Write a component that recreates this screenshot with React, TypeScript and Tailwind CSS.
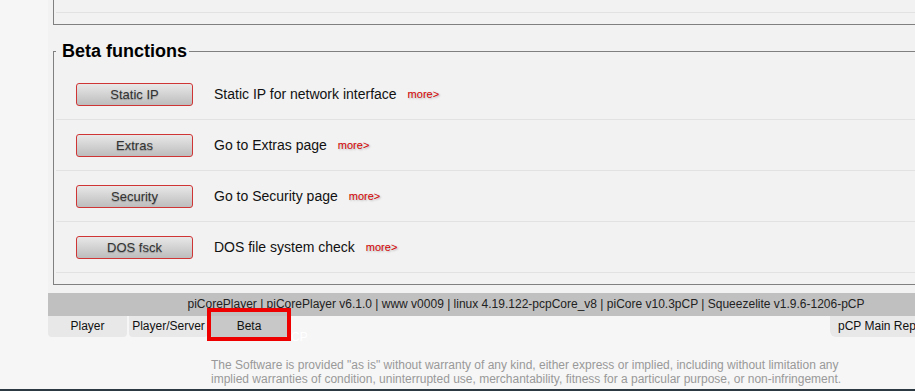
import React from "react";

const rows = [
  { btn: "Static IP", desc: "Static IP for network interface" },
  { btn: "Extras", desc: "Go to Extras page" },
  { btn: "Security", desc: "Go to Security page" },
  { btn: "DOS fsck", desc: "DOS file system check" },
];

export default function App() {
  return (
    <div className="relative w-[915px] h-[391px] overflow-hidden bg-[#f6f6f6] font-['Liberation_Sans',Arial,sans-serif]">
      <div className="flex flex-col h-full">
        <div className="ml-[48px] w-[956px] h-[293px] shrink-0 bg-[#f2f2f2] pl-[5px] pr-[5px]">
          {/* previous fieldset tail */}
          <div className="border-l border-r border-b border-[#808080] px-[2px] pb-[11px]">
            <div className="h-[13px] border-b border-[#e2e2e2]" />
          </div>
          {/* Beta fieldset */}
          <fieldset className="mt-[16px] border border-[#808080] px-[2px] pt-0 pb-[11px]">
            <legend className="pl-[6px] pr-[2px] text-[18px] leading-[20px] font-bold text-black">
              Beta functions
            </legend>
            <div className="mt-[8px]">
              {rows.map((r) => (
                <div
                  key={r.btn}
                  className="h-[51px] border-b border-[#e2e2e2] flex items-center pl-[20px]"
                >
                  <button className="w-[117px] h-[23px] rounded-[3px] border border-[#d03535] bg-gradient-to-b from-[#e8e8e8] to-[#bdbdbd] text-[13px] leading-[21px] text-[#333] [text-shadow:0_1px_1px_rgba(0,0,0,0.25)]">
                    {r.btn}
                  </button>
                  <span className="ml-[21px] text-[14px] text-[#111]">{r.desc}</span>
                  <span className="ml-[11px] text-[11px] text-[#d40000] [text-shadow:1px_1px_2px_rgba(0,0,0,0.25)]">
                    more&gt;
                  </span>
                </div>
              ))}
            </div>
          </fieldset>
        </div>
        {/* footer bar */}
        <div className="ml-[48px] w-[956px] h-[23px] shrink-0 bg-[#c0c0c0] text-center text-[12px] leading-[23px] text-[#222]">
          piCorePlayer | piCorePlayer v6.1.0 | www v0009 | linux 4.19.122-pcpCore_v8 | piCore v10.3pCP | Squeezelite v1.9.6-1206-pCP
        </div>
        {/* tabs */}
        <div className="ml-[48px] w-[956px] h-[21px] shrink-0 flex text-[12px] leading-[21px] text-[#111]">
          <div className="w-[79px] text-center bg-[#e8e8e8] rounded-b-[4px]">Player</div>
          <div className="ml-[2px] w-[79px] text-center bg-[#e8e8e8] rounded-b-[4px]">Player/Server</div>
          <div className="ml-[1px] w-[80px] text-center bg-[#c8c8c8] rounded-b-[4px]">Beta</div>
          <div className="ml-[2px] text-white leading-[42px] h-[21px] overflow-visible">CP</div>
          <div className="ml-auto w-[174px] pl-[8px] bg-[#e8e8e8] rounded-bl-[6px]">pCP Main Repository</div>
        </div>
        {/* disclaimer */}
        <div className="ml-[211px] mt-[21px] text-[12px] leading-[14px] text-[#999]">
          <div>The Software is provided "as is" without warranty of any kind, either express or implied, including without limitation any</div>
          <div>implied warranties of condition, uninterrupted use, merchantability, fitness for a particular purpose, or non-infringement.</div>
        </div>
        <div className="mt-auto h-[2px] bg-[#2c3842]" />
      </div>
      <div className="absolute left-[207px] top-[308px] w-[84px] h-[33px] border-[4px] border-[#ee0000]" />
    </div>
  );
}
